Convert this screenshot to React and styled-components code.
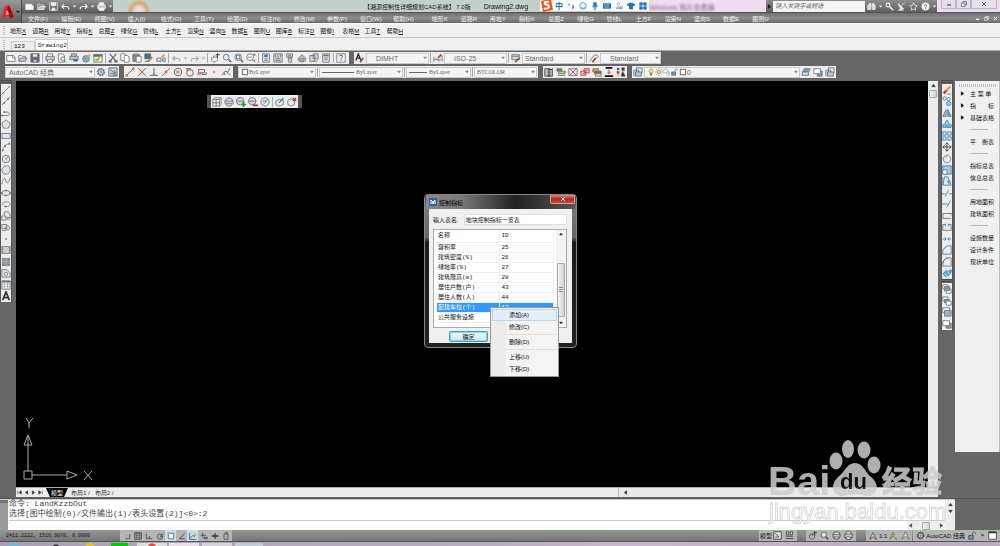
import styled, { createGlobalStyle } from "styled-components";

const GlobalStyle = createGlobalStyle`
    * {
        box-sizing: border-box;
    }
    body {
        margin: 0;
        overflow: hidden;
        background-color: #666;
        font-family: "Liberation Sans", "Noto Sans CJK SC", sans-serif;
        font-size: 6px;
        color: #222;
    }
    button, input, select {
        font: inherit;
        color: inherit;
        margin: 0;
        padding: 0;
        border: none;
        background: none;
        border-radius: 0;
        outline: none;
    }
    a {
        color: inherit;
        text-decoration: none;
    }
`;

/* ---------- icons, all drawn on a 12 x 12 grid ---------- */

const Svg = styled.svg`
    display: block;
    flex: none;
    width: ${props=>props.$size || 10}px;
    height: ${props=>props.$size || 10}px;
    fill: none;
    stroke: currentColor;
    stroke-width: 1;
`;

const shapes = {
    new: <><path d="M1 3h8l2 3v4H1z" fill="#fff"/><path d="M8 3v3h3"/></>,
    open: <><path d="M1 10V3h3l1 1h4v2" /><path d="M1 10l2-4h8l-2 4z" fill="#b9c8d4"/></>,
    save: <><path d="M1 1h10v10H1z" fill="#5a6672"/><path d="M3 1h6v4H3z" fill="#eee"/><path d="M4 8h4v3H4z" fill="#ddd"/></>,
    print: <><path d="M3 4V1h6v3M3 8h6v3H3z" fill="#fff"/><path d="M1 4h10v5H1z" fill="#c2c8cc"/><path d="M3 8h6v3H3z" fill="#fff"/></>,
    preview: <><path d="M2 1h5l2 2v8H2z" fill="#fff"/><circle cx="7" cy="7" r="2.5" fill="#d6e6f2"/><path d="M9 9l2 2"/></>,
    plot: <><path d="M3 4V1h6v3M1 4h10v4H1z" fill="#b8c0c6"/><path d="M5 9h4" stroke="#1c6fb8" strokeWidth="2"/><path d="M8 7l3 2-3 2z" fill="#1c6fb8" stroke="none"/></>,
    globe: <><circle cx="6" cy="7" r="4" fill="#7db3dd"/><path d="M6 3l5-2v5z" fill="#f0b040" stroke="none"/><path d="M3 5c2 2 3 1 4 4" stroke="#3a9c50"/></>,
    edit: <><path d="M1 2h10v9H1z" fill="#e8efd8"/><path d="M1 2h10v2H1z" fill="#4b6f99"/><path d="M4 9l6-6" stroke="#e39a2d" strokeWidth="2"/><path d="M2 9c2-3 3 1 5-1" stroke="#3a9c50"/></>,
    cut: <><path d="M2 1l7 8M10 1L3 9" strokeWidth="1.5"/><path d="M1 9h3v2H1zM8 9h3v2H8z" fill="#888"/></>,
    copy: <><path d="M1 1h5l1 1v7H1z" fill="#fff"/><path d="M5 3h4l2 2v6H5z" fill="#fff"/></>,
    paste: <><path d="M1 2h8v8H1z" fill="#9b8566"/><path d="M3 1h4v2H3z" fill="#ccc"/><path d="M5 4h6v7H5z" fill="#fff"/></>,
    match: <><path d="M1 1h7v6H1z" fill="#3c6c9e"/><path d="M5 10l5-5" stroke="#c27a34" strokeWidth="2"/><path d="M1 10h5" stroke="#555"/></>,
    block: <><path d="M1 6h5v4H1zM8 6h3v4H8z" fill="#dde"/><path d="M7 5l3-3" stroke="#f09030" strokeWidth="2"/></>,
    undo: <><path d="M4 3L1 6l3 3M1 6h6c3 0 4 2 3 4" strokeWidth="1.5"/></>,
    redo: <><path d="M8 3l3 3-3 3M11 6H5C2 6 1 8 2 10" strokeWidth="1.5"/></>,
    pan: <><path d="M2 5v4c2 3 6 2 7-1V4M4 6V3M6 6V3M8 6V3" /><path d="M9 0v5M7 2h5" stroke="#333"/></>,
    zoom: <><circle cx="5" cy="5" r="3.5" fill="#dce9f2"/><path d="M8 8l3 3" strokeWidth="2"/></>,
    zoomwin: <><circle cx="5" cy="5" r="4" fill="#dce9f2"/><path d="M3 3h4v4H3z"/><path d="M8 8l3 3" strokeWidth="2"/></>,
    zoomprev: <><circle cx="5" cy="5" r="4" fill="#fff"/><path d="M2 5h5M8 8l3 3M8 9h3"/><path d="M9 1l2 2" strokeWidth="2"/></>,
    props: <><path d="M2 1h8v10H2z" fill="#e4e9ee"/><path d="M4 2h4v3H4z" fill="#2673b8" stroke="none"/><path d="M4 7h4M4 9h4"/></>,
    grid: <><path d="M1 1h10v10H1z" fill="#d0d6dc"/><path d="M3 2v3M6 2v5M9 2v3M3 7h6M3 9h6"/></>,
    palette: <><path d="M2 1h7v4H2zM4 5h4v6H4z" fill="#cfd5da"/><path d="M4 3h3M5 7h2"/></>,
    sheet: <><path d="M1 7l5-5 5 5-5 3z" fill="#b5bec5"/><path d="M3 7h6M1 9l5 2 5-2"/></>,
    markup: <><path d="M1 3h6v7H1zM5 1h6v6H5z" fill="#cdd5db"/><path d="M6 9l2 2 3-3"/></>,
    calc: <><path d="M2 1h8v10H2z" fill="#dfe3e6"/><path d="M3 3h6" strokeWidth="2"/><path d="M4 6h4M4 8h4"/></>,
    help: <><path d="M1 1h10v10H1z" fill="#fff"/><path d="M4 4c0-2 4-2 4 0 0 1-2 1-2 3M6 8v1.500" stroke="#224"/></>,
    textstyle: <><path d="M1 9l3-8 3 8M2 6h4" strokeWidth="1.500" stroke="#222"/><path d="M6 11l4-5" stroke="#9c4a1c" strokeWidth="2"/></>,
    dimstyle: <><path d="M1 5v5M1 8h9M11 3v7M3 6l5 4"/><path d="M6 6l4-4" stroke="#9c4a1c" strokeWidth="2"/></>,
    tablestyle: <><path d="M1 2h9v6H1z" fill="#d3dbe2"/><path d="M1 4h9"/><path d="M5 11l5-5" stroke="#9c4a1c" strokeWidth="2"/></>,
    leader: <><path d="M1 10l4-6 4-2 2 2-4 4" /><path d="M4 11l4-5" stroke="#9c4a1c" strokeWidth="2"/></>,
    gear: <><circle cx="6" cy="6" r="4" strokeDasharray="2 1" strokeWidth="2"/><circle cx="6" cy="6" r="3" fill="#eee"/><circle cx="6" cy="6" r="1"/></>,
    workspace: <><path d="M1 1h10v10H1z" fill="#c6ccd4"/><path d="M3 3l3 3M8 4v6M3 8h3"/><circle cx="8" cy="8" r="2"/></>,
    snapEnd: <><path d="M2 10l8-8" stroke="#555"/><path d="M1 9h2v2H1zM9 1h2v2H9z" stroke="#e8602c"/></>,
    snapInt: <><path d="M1 1l10 10M11 1L1 11" stroke="#555"/><path d="M5 5l2 2M7 5L5 7" stroke="#e8602c" strokeWidth="2"/></>,
    snapPerp: <><path d="M6 1v9M1 10h10" stroke="#555"/><path d="M5 8h2v2H5z" stroke="#e8602c"/></>,
    snapMid: <><path d="M1 11L11 1" stroke="#555"/><path d="M5 7l2-2" stroke="#e8602c" strokeWidth="3"/></>,
    snapCen: <><circle cx="6" cy="6" r="4.500" stroke="#555"/><circle cx="6" cy="6" r="1.500" stroke="#e8602c"/></>,
    snapTan: <><circle cx="6" cy="7" r="4" stroke="#555"/><path d="M1 2l6 0" stroke="#555"/><circle cx="3" cy="4" r="1" stroke="#e8602c"/></>,
    snapIns: <><path d="M2 3h7v4H2zM6 7v2h5V6" stroke="#555"/><path d="M1 7h3v2H1z" stroke="#e8602c"/></>,
    snapNode: <circle cx="6" cy="6" r="1" stroke="#e8602c"/>,
    snapNear: <><path d="M1 10l4-5 3 1 3-5M7 6l4 4" stroke="#555"/><path d="M3 7l2 2" stroke="#e8602c" strokeWidth="2"/></>,
    layA: <><path d="M1 2h6v9H1zM5 3h5v8H5z" fill="#ccc" stroke="#333"/><path d="M9 4l2-3" stroke="#d22"/></>,
    layB: <><path d="M1 2h6v3H1z" fill="#58a"/><path d="M3 5h8v3H3z" fill="#d6c63a"/><path d="M2 10h9" stroke="#374"/></>,
    layC: <><path d="M1 2h10v8H1z" fill="#e8e8e8"/><path d="M2 10l9-9M3 3l7 7" stroke="#c33"/></>,
    layD: <><path d="M1 5h6v5H1zM5 2h6v5H5z" fill="#f3dada" stroke="#d22"/><path d="M6 4h4M3 8h3"/></>,
    layE: <><path d="M1 2h7v4H1z" fill="#f0a030"/><path d="M3 5h8v3H3z" fill="#c8482a"/><path d="M4 8h7v3H4z" fill="#ddd"/></>,
    layF: <><path d="M2 1h8M1 11h10" strokeWidth="2" stroke="#111"/><path d="M6 3v5M4 6l2 2 2-2" stroke="#d22"/></>,
    layG: <><path d="M1 1h3v3H1z" fill="#36c" stroke="none"/><path d="M1 5h3v3H1z" fill="#d22" stroke="none"/><path d="M1 9h3v2H1z" fill="#eb2" stroke="none"/><path d="M6 11l2-6 3 6zM7 1h3v3H7z" fill="#222"/></>,
    layers: <><path d="M4 1h7v6H4zM1 4h6v6H1z" fill="#dbe6ee"/><path d="M3 6h7v5H3z" fill="#b8c8d6"/></>,
    layBlue: <><path d="M4 2h7L9 6H2z" fill="#5aa6de"/><path d="M2 6h7v4H1z" fill="#c4dcee"/></>,
    bulb: <><circle cx="6" cy="4.500" r="3" fill="#ffe26a" stroke="#b58b20"/><path d="M5 8h2v3H5z" fill="#888"/></>,
    sun: <><circle cx="6" cy="6" r="2.500" fill="#ffe98a" stroke="#8a7a3a"/><path d="M6 0v2M6 10v2M0 6h2M10 6h2M2 2l1 1M9 9l1 1M10 2L9 3M2 10l1-1" stroke="#8a7a3a"/></>,
    freeze: <g stroke="#aaa"><path d="M1 2h6v5H1z"/><circle cx="8" cy="8" r="2.500" fill="#ddd"/></g>,
    unlock: <><path d="M1 6h6v5H1z" fill="#4d9cd6"/><path d="M6 6V3c0-2 4-2 4 0v1"/></>,
    swatch: <path d="M2 2h8v8H2z" fill="#fff" stroke="#222"/>,
    line: <><path d="M2 10l8-8"/><path d="M1 10h2v1M10 1v2"/></>,
    xline: <><path d="M1 11L11 1"/><path d="M3 8h1v1H3zM8 3h1v1H8z" fill="#444"/></>,
    pline: <><path d="M1 9h7c3 0 3-4 0-4H4"/><path d="M1 8v2M4 4v2" strokeWidth="2"/></>,
    polygon: <path d="M6 1l5 4-2 6H3L1 5z" fill="#dfe5ec"/>,
    rect: <path d="M1 3h10v6H1z" fill="#dfe5ec"/>,
    arc: <><path d="M2 11c0-5 3-8 8-9"/><path d="M1 10h2M9 2h2M4 5h2" strokeWidth="2"/></>,
    circle: <><circle cx="6" cy="6" r="4.500" fill="#dfe5ec"/><path d="M6 6l3-3M5 6h2"/></>,
    cloud: <path d="M3 3c0-3 3-2 3-1 1-2 5-1 4 2 2 1 1 4 0 4 0 3-3 4-4 2-2 2-4 1-4-2-2-1-1-4 1-5z" fill="#dfe5ec"/>,
    spline: <path d="M1 10C3 0 5 2 6 6s3 3 5-4"/>,
    ellipse: <><ellipse cx="6" cy="6" rx="5" ry="3" fill="#dfe5ec"/><path d="M1 5v2M11 5v2M6 2v2M6 8v2" strokeWidth="2"/></>,
    earc: <><path d="M2 7C0 3 10 2 11 6c0 3-3 3-5 3"/><path d="M5 8v2" strokeWidth="2"/></>,
    insert: <><path d="M1 6h5v5H1z" fill="#dfe5ec"/><path d="M4 5V1h5l2 4v3H7"/><circle cx="9" cy="9" r="1.500"/></>,
    mkblock: <><path d="M1 3h6v5H1z" fill="#dfe5ec"/><circle cx="8" cy="7" r="2.500"/><path d="M1 10h5"/></>,
    point: <path d="M5 6h2" strokeWidth="2"/>,
    hatch: <><path d="M2 2h8v8H2z" fill="#dfe3e8"/><path d="M3 6l3-3M3 9l6-6M6 9l3-3" strokeWidth=".6"/><path d="M1 1v10M11 1v10"/></>,
    gradient: <><path d="M2 2h8v8H2z" fill="#9aa3ab"/><path d="M1 1l3 3M11 1L8 4M1 11l3-3M11 11L8 8"/></>,
    region: <><path d="M1 2h6l4 4v5H1z" fill="#dfe5ec"/><circle cx="6" cy="7" r="2" fill="#fff"/></>,
    table: <><path d="M1 1h10v10H1z" fill="#fff"/><path d="M1 2h10" strokeWidth="2"/><path d="M1 5h10M1 8h10M4 2v9M8 2v9" strokeWidth=".6"/></>,
    mtext: <path d="M2 11L6 1l4 10M3 8h6" strokeWidth="2" stroke="#333"/>,
    erase: <><path d="M4 8l6-6" stroke="#e0a050" strokeWidth="3"/><path d="M2 10l3-3" stroke="#c43a2a" strokeWidth="3"/><path d="M6 11h5"/></>,
    copyobj: <><circle cx="3" cy="3" r="2"/><circle cx="8" cy="4" r="2"/><circle cx="8" cy="9" r="2.500" fill="#9ccdf0" stroke="#2d7fc0"/></>,
    mirror: <><path d="M5 2v8H1z" fill="#aab4bc"/><path d="M7 2v8h4z" fill="#5aa6de" stroke="#2d7fc0"/></>,
    offset: <><path d="M1 10V7l3-1c0-6 4-6 4 0l3 1v3z" stroke="#2d7fc0" fill="#9ccdf0"/><path d="M4 10V8h4v2"/></>,
    array: <><path d="M1 1h4v4H1zM7 1h4v4H7zM1 7h4v4H1zM7 7h4v4H7z" stroke="#2d7fc0" fill="#d8ecfa"/></>,
    move: <path d="M6 1v10M1 6h10M4 3l2-2 2 2M4 9l2 2 2-2M3 4L1 6l2 2M9 4l2 2-2 2" stroke="#333"/>,
    rotate: <path d="M4 2a4.500 4.500 0 1 0 4 0M4 2l4-1M4 2l2 2"/>,
    scale: <><path d="M1 1h10v10H1z" fill="#9ccdf0" stroke="#2d7fc0"/><path d="M1 6h5v5H1z" fill="#fff"/></>,
    stretch: <><path d="M3 1h4l4 10H1z" fill="#d8ecfa" stroke="#2d7fc0"/><path d="M1 1v10M6 7h4M8 5v5"/></>,
    trim: <><path d="M0 7h4M8 7h4" stroke="#2d7fc0"/><path d="M4 10l4-8"/></>,
    extend: <><path d="M0 6h7" stroke="#2d7fc0"/><path d="M6 10l4-8"/></>,
    breakpt: <><path d="M1 3h9M1 9h10M1 3v6"/><path d="M8 3h3v2" stroke="#2d7fc0"/></>,
    breakobj: <><path d="M1 3v7h10V3M1 3h3M8 3h3"/><path d="M4 2v3M8 2v3" stroke="#2d7fc0"/></>,
    join: <path d="M1 6h4M7 6h4M3 4l2 2-2 2M9 4L7 6l2 2" stroke="#2d7fc0"/>,
    chamfer: <><path d="M1 11V6l5-5h5v10z" fill="#e8eef2"/><path d="M1 6l5-5" stroke="#2d7fc0"/></>,
    fillet: <><path d="M1 11V8c0-4 3-7 7-7h3v10z" fill="#e8eef2"/><path d="M1 8c0-4 3-7 7-7" stroke="#2d7fc0"/></>,
    explode: <><path d="M1 7l4-4 3 1 3-2v3L8 9 4 10z" fill="#5aa6de" stroke="#2d7fc0"/><path d="M3 7l3 2M6 4l3 3" stroke="#fff"/></>,
    orderA: <><path d="M1 1h6v5H1z" fill="#fff"/><path d="M5 6h6v5H5z" fill="#fff"/><path d="M3 3h6v5H3z" fill="#8b98a5"/></>,
    orderB: <><path d="M1 1h6v5H1z" fill="#fff"/><path d="M3 4h6v4H3z" fill="#8b98a5"/><path d="M5 6h6v5H5z" fill="#fff"/></>,
    orderC: <><path d="M1 1h8v6H1z" fill="#fff"/><path d="M3 4h8v7H3z" fill="#a4adb6"/></>,
    orderD: <><path d="M5 5h6v6H5z" fill="#8b98a5"/><path d="M1 2h8v6H1z" fill="#fff"/></>,
    find: <><path d="M1 10V5l2-3h2v8zM7 10V2h2l2 3v5z" fill="#ddd"/><path d="M5 5h2"/></>,
    key: <><circle cx="4" cy="4" r="2.500" strokeWidth="1.500"/><path d="M6 6l5 5" strokeWidth="2"/></>,
    dish: <><path d="M2 2c0 5 3 7 7 7zM5 8l-3 3h7M6 5l4-4" fill="#ddd"/></>,
    star: <path d="M6 1l1.500 3.500 3.500.5-2.500 2.500.5 3.500-3-2-3 2 .5-3.500L1 5l3.500-.5z"/>,
    info: <><circle cx="6" cy="6" r="5" fill="#f2f2f2"/><path d="M4.500 5c0-2 3-2 3 0 0 1-1.500 1-1.500 2.500M6 8.500v1" stroke="#444"/></>,
    min: <path d="M2 8h8" strokeWidth="3"/>,
    restore: <><path d="M4 4V1h7v7H8M1 4h7v7H1z" strokeWidth="1.500"/></>,
    close: <path d="M2 2l8 8M10 2l-8 8" strokeWidth="2"/>,
    box3d: <><path d="M1 3h8v8H1zM3 1h8v8" fill="none"/><path d="M1 7h8M5 3v8M1 3l2-2M9 3l2-2M9 11l2-2"/></>,
    sphere: <><circle cx="6" cy="6" r="5" fill="#cfd6dc"/><path d="M1 5h10M2 8h8"/></>,
    sphereAdd: <><circle cx="5" cy="5" r="4.500" fill="#cfd6dc"/><path d="M1 5h9"/><path d="M9 6v6M6 9h6" stroke="#1ca21c" strokeWidth="2"/></>,
    sphereDel: <><circle cx="5" cy="5" r="4.500" fill="#cfd6dc"/><path d="M1 5h9"/><path d="M6 10h6" stroke="#d22" strokeWidth="2"/></>,
    sphereRef: <><circle cx="6" cy="6" r="5" fill="#dfe5ea"/><path d="M3 5h5M4 9l5-6"/></>,
    cubeBlue: <><path d="M1 5l4-2 5 1v5l-5 2-4-2z" fill="#e4ebf0"/><path d="M5 7l5-6" stroke="#2d7fc0" strokeWidth="1.500"/></>,
    cubeRed: <><path d="M1 4l4-2 4 2v5l-4 2-4-2z" fill="#e4ebf0"/><path d="M7 1l4 4M11 1L7 5" stroke="#d22" strokeWidth="1.500"/></>,
    stSnap: <path d="M10 3v7H3M5 5v1" />,
    stGrid: <><path d="M1 1h10v10H1z" fill="#aab"/><path d="M1 2h10M1 5h10M1 8h10M4 1v10M8 1v10" strokeWidth=".6"/></>,
    stOrtho: <path d="M2 2v8h9M5 7h2v3"/>,
    stPolar: <><circle cx="6" cy="7" r="4"/><path d="M6 7l5-5M6 7h4"/></>,
    stOsnap: <><path d="M2 2h8v8H2z" fill="#fff"/><path d="M1 1h2v2H1z" stroke="#e8a040" fill="#e8a040"/></>,
    stTrack: <path d="M10 2L2 10h8"/>,
    stUcs: <><path d="M1 1v10h10"/><path d="M2 9l4-4 2 2 2-3"/><circle cx="9" cy="3" r="2" fill="#f0b050" stroke="none"/></>,
    stDyn: <path d="M4 1v7M1 5h8M6 8h5v2H6z"/>,
    stLw: <path d="M6 2v8M1 6h10" strokeWidth="2"/>,
    stQp: <path d="M3 3h6v8H3zM4 1h4v2"/>,
    layout: <><path d="M1 1h10v10H1z" fill="#ddd"/><path d="M3 3l5 5M3 8h5"/></>,
    sheets: <><path d="M2 1h3v4H2zM7 1h3v4H7z" fill="#ddd"/><path d="M1 7h10M1 10h10"/></>,
    annot: <path d="M1 11L6 1l5 10-5-4z" fill="#ddd"/>,
    annotSun: <><path d="M1 11L5 2l5 9-5-4z"/><circle cx="9" cy="7" r="2" fill="#f5b030" stroke="none"/></>,
    clean: <><path d="M1 1h10v10H1z" fill="#fff"/><path d="M1 2h10" strokeWidth="2"/></>,
    smile: <><circle cx="6" cy="6" r="5"/><path d="M3 7c1 3 5 3 6 0M4 4v1M8 4v1"/></>,
    mic: <><path d="M4 1h4v6H4z" fill="currentColor"/><path d="M2 5c0 5 8 5 8 0M6 9v3M4 11h4"/></>,
    keyboard: <><path d="M0 2h12v8H0z" fill="currentColor" stroke="none"/><path d="M2 4h8M2 6h8M3 8h6" stroke="#fff" strokeDasharray="1 1"/></>,
    user: <g stroke="#7d93b0"><circle cx="5" cy="3" r="2"/><path d="M2 10c0-4 5-4 6 0zM7 7h5v3H7z" fill="#bcd"/></g>,
    shirt: <path d="M4 1h4l4 2-1 3H9v5H3V6H1L0 3z" fill="currentColor" stroke="none"/>,
    tiles: <path d="M1 1h4v4H1zM7 1h4v4H7zM1 7h4v4H1zM7 7h4v4H7z" fill="currentColor"/>,
    comma: <><circle cx="3" cy="4" r="1" /><path d="M8 5c2 0 2 3 0 5" strokeWidth="2"/></>,
    first: <path d="M3 3v6M9 3L5 6l4 3z" fill="currentColor"/>,
    prev: <path d="M8 3L4 6l4 3z" fill="currentColor"/>,
    next: <path d="M4 3l4 3-4 3z" fill="currentColor"/>,
    last: <path d="M9 3v6M3 3l4 3-4 3z" fill="currentColor"/>,
    up: <path d="M3 8l3-4 3 4z" fill="currentColor"/>,
    down: <path d="M3 4l3 4 3-4z" fill="currentColor"/>,
};

const Icon = ({ name, size, color }) => (
    <Svg viewBox="0 0 12 12" $size={size} color={color} aria-hidden="true">{shapes[name]}</Svg>
);

/* ---------- shared parts ---------- */

const IconButton = styled.button`
    display: flex;
    align-items: center;
    justify-content: center;
    flex: none;
    width: ${props=>props.$w || 12}px;
    height: 100%;
    color: ${props=>props.$color || "#6a747e"};
    background-color: ${props=>props.$on ? "#bfe3f2" : "transparent"};
`;
const Row = styled.div`
    display: flex;
    align-items: center;
`;
const Spacer = styled.div`
    flex: 1;
`;

const Tools = ({ names, size, color, w }) => names.map((name, i) =>
    name === "|" ? <Separator key={i}/> : (
        <IconButton key={i} aria-label={name} $color={color} $w={name === "down" ? 6 : w}>
            <Icon name={name} size={name === "down" ? 5 : size}/>
        </IconButton>
    )
);

const Page = styled.div`
    position: relative;
    display: flex;
    flex-direction: column;
    height: 100vh;
`;

/* ---------- title and menus ---------- */

const Header = styled.header`
    display: flex;
    height: 23px;
    flex: none;
    background-color: #777;
`;
const AppButton = styled.button`
    display: flex;
    align-items: center;
    width: 22px;
    background: linear-gradient(#999, #5e5e5e);
    border-right: 1px solid #444;
`;
const HeaderMain = styled.div`
    flex: 1;
    display: flex;
    flex-direction: column;
    min-width: 0;
`;
const TitleBar = styled.div`
    display: flex;
    height: 13px;
    background:
        radial-gradient(circle at 117px 11px, #e8dcd8 4px, #dca56e 8px, transparent 12px),
        radial-gradient(ellipse at 227px 12px, #ece4f4 8px, transparent 22px),
        linear-gradient(90deg, #c2d2cb 60%, #efdcf0 65%);
    border-bottom: 1px solid #555;
`;
const QuickAccess = styled(Row)`
    width: 91px;
    padding-left: 1px;
    color: #eee;
    background: linear-gradient(#8c8c8c, #5f5f5f);
`;
const Caption = styled.div`
    flex: 1;
    display: flex;
    align-items: center;
    justify-content: center;
    gap: 13px;
    padding-left: 251px;
    white-space: nowrap;
    color: #111;
`;
const FileName = styled.span`
    font-size: 7px;
`;
const ImeBar = styled(Row)`
    height: 11px;
    margin-left: 12px;
    background-color: #fff;
`;
const ImeText = styled.span`
    width: 12px;
    text-align: center;
    font-size: 8px;
    font-weight: bold;
    color: #1b74c5;
`;
const Ghost = styled.div`
    width: 118px;
    padding-top: 2px;
    overflow: hidden;
    white-space: nowrap;
    font-size: 7px;
    color: #857088;
    filter: blur(1px);
`;
const Search = styled(Row)`
    width: 171px;
    color: #eee;
    background: linear-gradient(#8c8c8c, #5f5f5f);
`;
const SearchInput = styled.input`
    width: 93px;
    height: 11px;
    padding-left: 2px;
    background-color: #f4f4f4;
    color: #666;
    font-style: italic;
    &::placeholder {
        color: #666;
        opacity: 1;
    }
`;
const WindowButtons = styled(Row)`
    width: 63px;
    height: 9px;
    padding-left: 4px;
    color: #666;
`;
const WindowButton = styled.button`
    display: flex;
    align-items: center;
    justify-content: center;
    width: ${props=>props.$wide ? 26 : 15}px;
    height: 9px;
    border: 1px solid #b9b4bd;
    border-top: none;
    background-color: rgba(220, 226, 228, 0.6);
`;
const MenuBar = styled.nav`
    display: flex;
    align-items: center;
    flex: 1;
    gap: 5px;
    padding-left: 6px;
    color: #f4f4f4;
    background: linear-gradient(#707070, #8d8d8d 50%, #696969);
`;
const MenuGroup = styled.div`
    display: grid;
    grid-template-columns: repeat(${props=>props.$count}, 1fr);
    width: ${props=>props.$width};
    white-space: nowrap;
`;
const SubMenu = styled.nav`
    display: flex;
    align-items: center;
    flex: none;
    height: 15px;
    padding-left: 3px;
    gap: 5px;
    background-color: #f0f0f0;
    border-top: 1px solid #fafafa;
    border-bottom: 1px solid #c8c8c8;
    color: #111;
`;
const Grip = styled.div`
    width: 2px;
    height: 9px;
    background: repeating-linear-gradient(#bbb 0 1px, #eee 1px 2px);
`;
const DocTabs = styled.div`
    display: flex;
    align-items: center;
    flex: none;
    height: 13px;
    padding-left: 3px;
    background-color: #f0f0f0;
    border-bottom: 1px solid #aaa;
    font-family: "Liberation Mono", monospace;
`;
const DocTab = styled.button`
    width: ${props=>props.$active ? 33 : 24}px;
    height: ${props=>props.$active ? 11 : 9}px;
    align-self: flex-end;
    padding-left: 2px;
    text-align: left;
    color: #111;
    border: 1px solid #ccc;
    border-bottom: none;
    background-color: ${props=>props.$active ? "#fff" : "#ececec"};
    &:first-of-type {
        margin-left: 6px;
    }
`;

/* ---------- toolbars ---------- */

const Toolbars = styled.div`
    display: flex;
    flex-direction: column;
    flex: none;
    gap: 2px;
    height: 29px;
    padding: 1px 0;
    background-color: #666;
`;
const ToolRow = styled.div`
    display: flex;
    height: 12px;
`;
const ToolPanel = styled.div`
    display: flex;
    align-items: center;
    width: ${props=>props.$w}px;
    margin-left: 5px;
    background-color: #ededed;
    color: #6a747e;
`;
const Separator = styled.span`
    flex: none;
    width: 1px;
    height: 10px;
    margin: 0 1px;
    background-color: #aaa;
`;
const Combo = styled.label`
    display: flex;
    align-items: center;
    flex: none;
    width: ${props=>props.$w}px;
    height: 11px;
    padding-left: ${props=>props.$pad || 2}px;
    border: 1px solid #c9c9c9;
    background-color: #f4f4f4;
    color: #666;
    font-size: ${props=>props.$serif ? 6 : 7}px;
    font-family: ${props=>props.$serif ? '"Liberation Serif", serif' : "inherit"};
    select {
        flex: 1;
        min-width: 0;
        appearance: none;
        line-height: 9px;
    }
`;
const Stroke = styled.span`
    width: ${props=>props.$w}px;
    height: 1px;
    margin-right: 2px;
    background-color: #666;
`;

const Picker = ({ label, value, children, ...rest }) => (
    <Combo {...rest}>
        {children}
        <select aria-label={label}><option>{value}</option></select>
        <Icon name="down" size={6} color="#888"/>
    </Combo>
);

/* ---------- work area ---------- */

const Work = styled.main`
    display: flex;
    flex: 1;
    min-height: 0;
    border-bottom: 1px solid #555;
    background-color: #666;
`;
const PaletteColumn = styled.div`
    width: ${props=>props.$w}px;
    padding: 0 1px;
    background-color: #555;
    align-self: flex-start;
`;
const PaletteHead = styled.div`
    height: 4px;
    background: repeating-linear-gradient(#4a4a4a 0 1px, #666 1px 2px);
`;
const Palette = styled.div`
    display: flex;
    flex-direction: column;
    height: ${props=>props.$h}px;
    background-color: #ececec;
    button {
        flex: 1;
        width: 100%;
        min-height: 0;
    }
`;
const Center = styled.div`
    flex: 1;
    display: flex;
    flex-direction: column;
    min-width: 0;
    margin: 1px 3px 1px 4px;
`;
const CanvasRow = styled.div`
    display: flex;
    flex: 1;
    min-height: 0;
`;
const Canvas = styled.div`
    position: relative;
    flex: 1;
    background-color: #000;
`;
const VScroll = styled.div`
    display: flex;
    flex-direction: column;
    align-items: center;
    width: 10px;
    padding-top: 1px;
    background-color: #ececec;
    color: #333;
`;
const Thumb = styled.div`
    width: 8px;
    height: ${props=>props.$h}px;
    margin-top: ${props=>props.$top || 1}px;
    border: 1px solid #aaa;
    border-radius: 1px;
    background: linear-gradient(90deg, #f5f5f5, #d0d0d0);
`;
const SheetTabs = styled.div`
    display: flex;
    align-items: center;
    height: 10px;
    border-top: 1px solid #aaa;
    background-color: #ececec;
    color: #333;
`;
const ModelTab = styled.button`
    width: 22px;
    height: 9px;
    margin-left: 2px;
    color: #fff;
    background-color: #000;
    clip-path: polygon(0 0, 100% 0, 82% 100%, 18% 100%);
`;
const SheetTab = styled.button`
    width: 24px;
    white-space: nowrap;
    text-align: left;
    padding-left: 3px;
`;
const HScroll = styled(Row)`
    width: 320px;
    height: 9px;
    padding-left: 3px;
    border-left: 1px solid #bbb;
    background-color: #e9e9e9;
`;
const Axes = styled.svg`
    position: absolute;
    left: 6px;
    bottom: 4px;
    width: 80px;
    height: 76px;
    fill: none;
    stroke: #aaa;
`;
const FloatBar = styled.div`
    position: absolute;
    left: 191px;
    top: 14px;
    display: flex;
    align-items: center;
    height: 13px;
    border-left: 4px solid #555;
    border-right: 4px solid #555;
    background-color: #ececec;
`;
const SidePanel = styled.aside`
    width: 45px;
    margin: 1px 0 46px 2px;
    padding: 3px 3px 0 4px;
    border-right: 1px solid #bbb;
    background-color: #f0f0f0;
    color: #111;
`;
const SideGrip = styled.div`
    height: 3px;
    background: repeating-linear-gradient(90deg, #bbb 0 1px, #eee 1px 2px);
`;
const SideItem = styled.a`
    display: flex;
    align-items: center;
    height: 12px;
    white-space: pre;
    span {
        width: 11px;
    }
`;
const SideRule = styled.div`
    height: 12px;
    padding: 6px 8px 0 11px;
    &::before {
        content: "";
        display: block;
        border-top: 1px solid #bbb;
    }
`;

/* ---------- dialog ---------- */

const Dialog = styled.section`
    position: absolute;
    left: 408px;
    top: 113px;
    width: 153px;
    padding: 0 4px 4px;
    border: 1px solid #888;
    border-radius: 4px;
    background: linear-gradient(#3a3a3a, #777 10%, #666 28%, #1c1c1c 31%, #222);
`;
const DialogTitle = styled.div`
    display: flex;
    align-items: center;
    gap: 2px;
    height: 14px;
    margin: 0 -3px;
    padding-left: 3px;
    color: #000;
    background: linear-gradient(90deg, #888, #777 25%, #222 60%, #555);
`;
const AppGlyph = styled.span`
    display: flex;
    align-items: center;
    justify-content: center;
    width: 8px;
    height: 8px;
    background-color: #2e5fae;
`;
const DialogClose = styled.button`
    display: flex;
    align-items: center;
    justify-content: center;
    align-self: flex-start;
    width: 25px;
    height: 9px;
    margin-left: auto;
    border: 1px solid #d99;
    border-top: none;
    border-radius: 0 0 2px 2px;
    color: #fff;
    background: linear-gradient(#d98a7c, #b5281a 50%, #c84a38);
`;
const DialogBody = styled.div`
    padding: 5px 5px 1px 4px;
    background-color: #f0f0f0;
    color: #111;
`;
const Field = styled.label`
    display: flex;
    align-items: center;
    gap: 5px;
    height: 11px;
    white-space: nowrap;
    input {
        flex: 1;
        min-width: 0;
        height: 11px;
        padding-left: 1px;
        border: 1px solid #ddd;
        background-color: #fff;
    }
`;
const ListBox = styled.div`
    display: flex;
    height: 99px;
    margin: 4px 0 3px;
    padding: 0 0 0 3px;
    border: 1px solid #aaa;
    background-color: #fff;
`;
const ListTable = styled.table`
    width: 117px;
    align-self: flex-start;
    border-collapse: collapse;
    table-layout: fixed;
    font-family: "Liberation Mono", "Noto Sans CJK SC", monospace;
    th, td {
        height: 10px;
        padding: 0 0 0 1px;
        line-height: 9px;
        text-align: left;
        font-weight: normal;
        white-space: nowrap;
        border-bottom: 1px solid #eee;
        border-right: 1px solid #eee;
    }
    th {
        height: 12px;
    }
    th:first-child {
        width: 62px;
    }
    td + td, th + th {
        padding-left: 2px;
    }
`;
const ListRow = styled.tr`
    color: ${props=>props.$selected ? "#fff" : "#111"};
    background-color: ${props=>props.$selected ? "#3399ff" : "#fff"};
`;
const ListScroll = styled(VScroll)`
    margin-left: auto;
    padding: 1px 0;
    justify-content: space-between;
    background-color: #f2f2f2;
`;
const ListThumb = styled(Thumb)`
    display: flex;
    align-items: center;
    justify-content: center;
    &::before {
        content: "";
        width: 4px;
        height: 5px;
        background: repeating-linear-gradient(#888 0 1px, #eee 1px 2px);
    }
`;
const OkButton = styled.button`
    display: block;
    width: 39px;
    height: 11px;
    margin-left: 16px;
    border: 1px solid #3c9cc8;
    border-radius: 2px;
    box-shadow: inset 0 0 0 1px #7fdcf6;
    background: linear-gradient(#f2fafd, #d2e6ef);
`;
const ContextMenu = styled.div`
    position: absolute;
    left: 474px;
    top: 226px;
    display: flex;
    flex-direction: column;
    width: 69px;
    padding: 1px;
    border: 1px solid #999;
    background: linear-gradient(90deg, #ececec 15px, #f3f3f3 15px);
    color: #111;
    hr {
        width: 51px;
        margin: 1px 0 1px 14px;
        border: none;
        border-top: 1px solid #ddd;
    }
`;
const ContextItem = styled.button`
    height: 12px;
    padding-left: 16px;
    text-align: left;
    border: 1px solid ${props=>props.$hover ? "#b8d6f0" : "transparent"};
    background-color: ${props=>props.$hover ? "rgba(225, 238, 250, 0.8)" : "transparent"};
    font-size: 6px;
    line-height: 9px;
`;

/* ---------- command line, status, taskbar ---------- */

const Command = styled.section`
    display: flex;
    flex: none;
    height: 31px;
    margin-right: 45px;
    border-top: 1px solid #ccc;
    background-color: #fff;
    font-family: "Liberation Mono", "Noto Sans CJK SC", monospace;
    font-size: 8px;
    color: #444;
`;
const CommandGrip = styled.div`
    width: 8px;
    background-color: #999;
    border-top: 3px solid #777;
`;
const CommandText = styled.div`
    flex: 1;
    display: flex;
    flex-direction: column;
    padding-left: 1px;
    p {
        margin: 0;
        line-height: 8px;
        white-space: nowrap;
    }
    p + p {
        line-height: 11px;
    }
`;
const CommandEntry = styled(Row)`
    flex: 1;
    margin-top: 1px;
    border-top: 1px solid #ccc;
    input {
        flex: 1;
        height: 8px;
    }
`;
const EntryScroll = styled(Row)`
    width: 38px;
    height: 9px;
    justify-content: space-between;
    background-color: #eee;
`;
const StatusBar = styled.footer`
    display: flex;
    align-items: center;
    flex: none;
    height: 12px;
    padding-left: 6px;
    background: linear-gradient(#969696, #767676);
    border-bottom: 1px solid #555;
    color: #111;
`;
const Coords = styled.span`
    width: 114px;
    font-family: "Liberation Mono", monospace;
    font-size: 5px;
`;
const StatusGroup = styled(Row)`
    height: 11px;
    padding: 0 1px;
    margin-right: ${props=>props.$gap || 0}px;
    background-color: #b4b4b4;
    white-space: nowrap;
`;
const Taskbar = styled.div`
    flex: none;
    height: 4px;
    background:
        radial-gradient(circle at 152px 6px, #d44 4px, transparent 5px),
        linear-gradient(#0c0, #0c0) 111px 1px / 17px 3px no-repeat,
        linear-gradient(#ddd, #ddd) 137px 1px / 30px 3px no-repeat,
        linear-gradient(#e8e0e4, #e8e0e4) 169px 1px / 30px 3px no-repeat,
        linear-gradient(#d8d4dc, #d8d4dc) 202px 1px / 30px 3px no-repeat,
        linear-gradient(#c4ccdc, #c4ccdc) 235px 1px / 28px 3px no-repeat,
        radial-gradient(circle at 14px 6px, #7fb2cc 5px, transparent 8px),
        radial-gradient(circle at 56px 6px, #222 3px, transparent 4px),
        radial-gradient(circle at 90px 5px, #e0c030 4px, transparent 5px),
        linear-gradient(90deg, #a9a0b4, #b9aebf 50%, #cbb4cf 62%, #b8adbd);
`;
const Watermark = styled.svg`
    position: absolute;
    right: 48px;
    bottom: 19px;
    width: 184px;
    height: 92px;
    pointer-events: none;
    font-family: "Liberation Sans", "Noto Sans CJK SC", sans-serif;
    font-weight: bold;
    fill: #cdcdcd;
`;

const mainMenus = ["文件(F)", "编辑(E)", "视图(V)", "插入(I)", "格式(O)", "工具(T)", "绘图(D)", "标注(N)", "修改(M)", "参数(P)", "窗口(W)", "帮助(H)"];
const planMenus = ["地形X", "道路R", "用地Y", "指标K", "总图Z", "绿化G", "管线L", "土方F", "渲染N", "竖向S", "数据E", "图则U"];
const subMenus = ["地形X", "道路R", "用地Y", "指标K", "总图Z", "绿化G", "管线L", "土方F", "渲染N", "竖向S", "数据E", "图则U", "图库B", "标注D", "图像I", "表格M", "工具T", "帮助H"];
const sideItems = ["主 菜 单", "指　　标", "基础表格", "-", "平　衡表", "-", "指标总表", "信息总表", "-", "用地面积", "建筑面积", "-", "设施数量", "设计条件", "现状单位"];
const rows = [
    ["容积率", "25"],
    ["建筑密度(%)", "26"],
    ["绿地率(%)", "27"],
    ["建筑限高(m)", "28"],
    ["居住户数(户)", "43"],
    ["居住人数(人)", "44"],
    ["配建车位(个)", "12"],
    ["公共服务设施", ""],
];
const drawTools = ["line", "xline", "pline", "polygon", "rect", "arc", "circle", "cloud", "spline", "ellipse", "earc", "insert", "mkblock", "point", "hatch", "gradient", "region", "table", "mtext"];
const modifyTools = ["erase", "copyobj", "mirror", "offset", "array", "move", "rotate", "scale", "stretch", "trim", "extend", "breakpt", "breakobj", "join", "chamfer", "fillet", "explode"];
const statusTools = ["stSnap", "stGrid", "stOrtho", "stPolar", "stOsnap", "stTrack", "stUcs", "stDyn", "stLw", "stQp"];

const Top = () => {
    return (
        <Header>
            <AppButton aria-label="menu">
                <svg width="15" height="20" viewBox="0 0 15 20">
                    <path d="M1 18L5 4l4-1 5 12-4 1-2-2-4 1z" fill="#e02a26"/>
                    <path d="M9 3l5 12-4 1L7 8z" fill="#a00c0c"/>
                    <path d="M7 8l2 4-3 1z" fill="#f6d0cc"/>
                </svg>
                <Icon name="down" size={6} color="#222"/>
            </AppButton>
            <HeaderMain>
                <TitleBar>
                    <QuickAccess>
                        <Tools names={["new", "open", "save", "undo", "down", "redo", "down", "print", "down"]} size={9} color="#eee"/>
                    </QuickAccess>
                    <Caption>
                        <span>【湘源控制性详细规划CAD系统】 7.0版</span>
                        <FileName>Drawing2.dwg</FileName>
                    </Caption>
                    <ImeBar>
                        <svg width="13" height="13" viewBox="0 0 13 13">
                            <path d="M1 2l10-2 2 11-10 2z" fill="#f0521e"/>
                            <path d="M9 3C5 2 4 4 5 5s5 1 4 3-4 2-5 1" fill="none" stroke="#fff" strokeWidth="2"/>
                        </svg>
                        <ImeText>中</ImeText>
                        <Tools names={["comma", "smile", "mic", "keyboard", "user", "shirt", "tiles"]} size={8} color="#1b74c5"/>
                    </ImeBar>
                    <Ghost>Windows 照片查看器</Ghost>
                    <Search>
                        <Icon name="next" size={7} color="#111"/>
                        <SearchInput aria-label="search" placeholder="键入关键字或短语"/>
                        <Tools names={["find", "down", "key", "dish", "star", "info", "down"]} size={9} color="#eee"/>
                    </Search>
                    <WindowButtons>
                        <WindowButton aria-label="minimize"><Icon name="min" size={6}/></WindowButton>
                        <WindowButton aria-label="restore"><Icon name="restore" size={6}/></WindowButton>
                        <WindowButton aria-label="close" $wide><Icon name="close" size={6}/></WindowButton>
                    </WindowButtons>
                </TitleBar>
                <MenuBar>
                    <MenuGroup $count={12} $width="41%">
                        {mainMenus.map(m => <a href="#" key={m}>{m}</a>)}
                    </MenuGroup>
                    <MenuGroup $count={12} $width="36%">
                        {planMenus.map(m => <a href="#" key={m}>{m}</a>)}
                    </MenuGroup>
                    <Spacer/>
                    <Row>
                        <Tools names={["min", "restore", "close"]} size={5} color="#fff" w={9}/>
                    </Row>
                </MenuBar>
            </HeaderMain>
        </Header>
    )
}

const ToolArea = () => {
    return (
        <Toolbars>
            <ToolRow>
                <ToolPanel $w={344}>
                    <Tools names={["new", "open", "save", "|", "print", "preview", "plot", "globe", "edit", "|", "cut", "copy", "paste", "match", "block", "|"]}/>
                    <Tools names={["undo", "down", "redo", "down"]} color="#aaa" size={9}/>
                    <Tools names={["|", "pan", "zoom", "zoomwin", "zoomprev", "|", "props", "grid", "palette", "sheet", "markup", "calc", "|", "help"]}/>
                </ToolPanel>
                <ToolPanel $w={307}>
                    <Tools names={["textstyle"]}/>
                    <Picker label="text style" value="DIMHT" $w={63} $pad={9}/>
                    <Separator/>
                    <Tools names={["dimstyle"]}/>
                    <Picker label="dimension style" value="ISO-25" $w={63} $pad={9}/>
                    <Separator/>
                    <Tools names={["tablestyle"]}/>
                    <Picker label="table style" value="Standard" $w={63}/>
                    <Separator/>
                    <Tools names={["leader"]}/>
                    <Picker label="leader style" value="Standard" $w={61} $pad={9}/>
                </ToolPanel>
            </ToolRow>
            <ToolRow>
                <ToolPanel $w={114}>
                    <Picker label="workspace" value="AutoCAD 经典" $w={90} $pad={3}/>
                    <Tools names={["gear", "workspace"]}/>
                </ToolPanel>
                <ToolPanel $w={109}>
                    <Tools names={["snapEnd", "snapInt", "snapPerp", "snapMid", "snapCen", "snapTan", "snapIns", "snapNode", "snapNear"]}/>
                </ToolPanel>
                <ToolPanel $w={300}>
                    <Picker label="color" value="ByLayer" $w={78} $serif>
                        <Icon name="swatch" size={8}/>
                    </Picker>
                    <Separator/>
                    <Picker label="linetype" value="ByLayer" $w={84} $serif><Stroke $w={32}/></Picker>
                    <Separator/>
                    <Picker label="lineweight" value="ByLayer" $w={65} $serif><Stroke $w={18}/></Picker>
                    <Separator/>
                    <Picker label="plot style" value="BTCOLOR" $w={63} $serif/>
                </ToolPanel>
                <ToolPanel $w={84}>
                    <Tools names={["layA", "layB", "layC", "layD", "layE", "layF", "layG"]}/>
                </ToolPanel>
                <ToolPanel $w={204}>
                    <Tools names={["layers"]}/>
                    <Picker label="layer" value="0" $w={156}>
                        {["bulb", "sun", "freeze", "unlock", "swatch"].map(n => <Icon key={n} name={n} size={8}/>)}
                    </Picker>
                    <Tools names={["layBlue", "orderD", "layers"]}/>
                </ToolPanel>
            </ToolRow>
        </Toolbars>
    )
}

const IndexDialog = () => {
    return (
        <Dialog aria-label="控制指标">
            <DialogTitle>
                <AppGlyph>
                    <svg width="6" height="6" viewBox="0 0 6 6" fill="none" stroke="#fff">
                        <path d="M1 1l2 2 2-2M1 1v4M5 1v4M2 5l1-2 1 2"/>
                    </svg>
                </AppGlyph>
                控制指标
                <DialogClose aria-label="close"><Icon name="close" size={6}/></DialogClose>
            </DialogTitle>
            <DialogBody>
                <Field>
                    输入表名:
                    <input defaultValue="地块控制指标一览表"/>
                </Field>
                <ListBox>
                    <ListTable>
                        <thead>
                            <tr><th>名称</th><th>ID</th></tr>
                        </thead>
                        <tbody>
                            {rows.map(([name, id]) => (
                                <ListRow key={name} $selected={id === "12"}>
                                    <td>{name}</td>
                                    <td>{id}</td>
                                </ListRow>
                            ))}
                        </tbody>
                    </ListTable>
                    <ListScroll>
                        <Icon name="up" size={6}/>
                        <ListThumb $h={54} $top={22}/>
                        <Icon name="down" size={6}/>
                    </ListScroll>
                </ListBox>
                <OkButton>确定</OkButton>
            </DialogBody>
        </Dialog>
    )
}

const WorkArea = () => {
    return (
        <Work>
            <PaletteColumn $w={12}>
                <PaletteHead/>
                <Palette $h={218}><Tools names={drawTools}/></Palette>
            </PaletteColumn>
            <Center>
                <CanvasRow>
                    <Canvas>
                        <FloatBar>
                            <Tools names={["box3d", "sphere", "sphereAdd", "sphereDel", "sphereRef", "|", "cubeBlue", "cubeRed"]}/>
                        </FloatBar>
                        <Axes viewBox="0 0 80 76">
                            <path d="M2 64h8v8H2zM6 64V29M2 38l4-10 4 10zM10 68h35M45 64l10 4-10 4zM4 11l3 5 4-5M7 16v5M62 64l8 9M70 64l-8 9"/>
                        </Axes>
                        <IndexDialog/>
                        <ContextMenu role="menu">
                            <ContextItem $hover>添加(A)</ContextItem>
                            <ContextItem>修改(C)</ContextItem>
                            <hr/>
                            <ContextItem>删除(D)</ContextItem>
                            <hr/>
                            <ContextItem>上移(U)</ContextItem>
                            <ContextItem>下移(D)</ContextItem>
                        </ContextMenu>
                    </Canvas>
                    <VScroll>
                        <Icon name="up" size={7}/>
                        <Thumb $h={8}/>
                    </VScroll>
                </CanvasRow>
                <SheetTabs>
                    <Tools names={["first", "prev", "next", "last"]} size={7} color="#333" w={7}/>
                    <ModelTab>模型</ModelTab>
                    <SheetTab>布局1 /</SheetTab>
                    <SheetTab>布局2 /</SheetTab>
                    <Spacer/>
                    <HScroll><Icon name="prev" size={7}/></HScroll>
                </SheetTabs>
            </Center>
            <PaletteColumn $w={12}>
                <PaletteHead/>
                <Palette $h={195}><Tools names={modifyTools}/></Palette>
                <PaletteHead/>
                <Palette $h={47}><Tools names={["orderA", "orderB", "orderC", "orderD"]}/></Palette>
            </PaletteColumn>
            <SidePanel>
                <SideGrip/>
                {sideItems.map((item, i) => item === "-" ? <SideRule key={i}/> : (
                    <SideItem href="#" key={i}>
                        <span>{i < 3 && <Icon name="next" size={7} color="#000"/>}</span>
                        {item}
                    </SideItem>
                ))}
            </SidePanel>
        </Work>
    )
}

const Bottom = () => {
    return (
        <>
            <Command>
                <CommandGrip/>
                <CommandText>
                    <p>命令: LandKzzbOut</p>
                    <p>选择[图中绘制(0)/文件输出(1)/表头设置(2)]&lt;0&gt;:2</p>
                    <CommandEntry>
                        <input aria-label="command"/>
                        <EntryScroll>
                            <Icon name="prev" size={7}/>
                            <Thumb $h={8}/>
                            <Icon name="next" size={7}/>
                        </EntryScroll>
                    </CommandEntry>
                </CommandText>
                <VScroll>
                    <Icon name="up" size={7}/>
                    <Icon name="down" size={7}/>
                </VScroll>
            </Command>
            <StatusBar>
                <Coords>2411.2222, 1516.9070, 0.0000</Coords>
                <StatusGroup>
                    {statusTools.map(name => (
                        <IconButton key={name} aria-label={name} $w={11} $color="#333" $on={name === "stOsnap" || name === "stUcs"}>
                            <Icon name={name} size={8}/>
                        </IconButton>
                    ))}
                </StatusGroup>
                <Spacer/>
                <StatusGroup $gap={9}>
                    模型
                    <Tools names={["layout", "sheets"]} size={9} color="#333"/>
                </StatusGroup>
                <StatusGroup $gap={10}>
                    <Tools names={["pan", "zoom", "sphere", "print"]} size={9} color="#444"/>
                </StatusGroup>
                <StatusGroup $gap={1}>
                    <Tools names={["annot"]} size={8} color="#333"/>
                    1:1　
                    <Tools names={["annotSun", "annot"]} size={9} color="#666"/>
                </StatusGroup>
                <StatusGroup>
                    <Tools names={["gear"]} size={9} color="#444"/>
                    AutoCAD 经典　
                    <Tools names={["unlock"]} size={9} color="#444" w={14}/>
                    <Tools names={["down", "clean"]} size={9} color="#333" w={14}/>
                </StatusGroup>
            </StatusBar>
            <Taskbar/>
        </>
    )
}

const App = () => {
    return (
        <Page>
            <GlobalStyle/>
            <Top/>
            <SubMenu>
                <Grip/>
                <MenuGroup $count={18} $width="40%">
                    {subMenus.map(m => <a href="#" key={m}>{m.slice(0, 2)}<u>{m[2]}</u></a>)}
                </MenuGroup>
            </SubMenu>
            <DocTabs>
                <Grip/>
                <DocTab>123</DocTab>
                <DocTab $active>Drawing2</DocTab>
            </DocTabs>
            <ToolArea/>
            <WorkArea/>
            <Bottom/>
            <Watermark viewBox="0 0 184 92" opacity="0.85">
                <text x="0" y="60" fontSize="40">Bai</text>
                <ellipse cx="68" cy="26" rx="6.500" ry="8.500"/>
                <ellipse cx="80" cy="14" rx="6" ry="9"/>
                <ellipse cx="96" cy="15" rx="6.500" ry="8.500"/>
                <ellipse cx="106" cy="30" rx="6.500" ry="8.500"/>
                <path d="M87 28c8 0 10 9 16 14 10 8 6 20-5 19-7-2-15-2-22 0-11 1-15-10-6-19 7-5 9-14 17-14z"/>
                <text x="72" y="54" fontSize="22" fill="#111">du</text>
                <text x="114" y="57" fontSize="30" stroke="#cdcdcd">经验</text>
                <text x="1" y="84" fontSize="22" fontWeight="normal" fill="#fff" stroke="#d4d4d4">jingyan.baidu.com</text>
            </Watermark>
        </Page>
    )
}

export default App
